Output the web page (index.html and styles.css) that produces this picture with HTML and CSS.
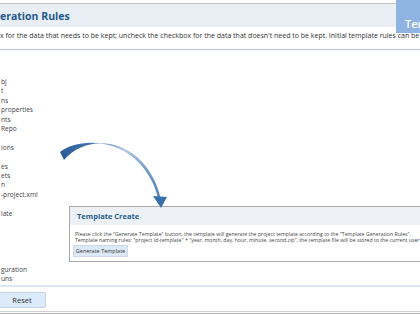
FILE: index.html
```html
<html><head>
<meta name="viewport" content="width=device-width, initial-scale=1">
<title>Template Generation Rules</title>
<meta charset="utf-8">
<link rel="stylesheet" href="styles.css">
</head><body>

<header class="rules-head">
<h1>eration Rules</h1>
</header>
<div class="tab">Tem</div>

<p class="hint">x for the data that needs to be kept; uncheck the checkbox for the data that doesn't need to be kept. Initial template rules can be</p>

<ul class="tree">
<li>bj</li>
<li>t</li>
<li>ns</li>
<li>properties</li>
<li>nts</li>
<li>Repo</li>
<li class="gap"></li>
<li>ions</li>
<li class="gap"></li>
<li>es</li>
<li>ets</li>
<li>n</li>
<li>-project.xml</li>
<li class="gap"></li>
<li>late</li>
<li class="gap"></li>
<li class="gap"></li>
<li class="gap"></li>
<li class="gap"></li>
<li class="gap"></li>
<li>guration</li>
<li>uns</li>
</ul>

<div class="footer">
<button class="reset">Reset</button>
</div>
<div class="rule"></div>

<div class="dialog">
<div class="dialog-head">Template Create</div>
<div class="dialog-body">
<p>Please click the "Generate Template" button, the template will generate the project template according to the "Template Generation Rules".</p>
<p>Template naming rules: "project id-template" + "year, month, day, hour, minute, second.zip", the template file will be stored to the current user's de</p>
<button class="gen">Generate Template</button>
</div>
</div>

<svg class="arrow" width="420" height="315" viewBox="0 0 420 315">
<defs>
<linearGradient id="fade" gradientUnits="userSpaceOnUse" x1="60" y1="0" x2="166" y2="0">
<stop offset="0" stop-color="#2a5a95"/>
<stop offset="0.3" stop-color="#4677b2"/>
<stop offset="0.62" stop-color="#b3cbe6"/>
<stop offset="0.85" stop-color="#6b95c9"/>
<stop offset="1" stop-color="#3a6fae"/>
</linearGradient>
</defs>
<path d="M60 152 C75 140 110 137 135 159 C148 171 155 185 158 198 L160.5 198 C157 183 150 169 137 157 C112 136 80 141 64 160 Z" fill="url(#fade)"/>
<polygon points="153,196 167,197 161,208" fill="#3a6fae"/>
</svg>

</body></html>
```

FILE: styles.css
```css
html, body {
	margin: 0;
	overflow: hidden;
}

body {
	position: relative;
	width: 420px;
	height: 315px;
	font-family: "Open Sans", "Noto Sans", sans-serif;
	color: #333;
	background: #fff;
}

.rules-head {
	margin-top: 3px;
	height: 23px;
	border-top: 1px solid #c4c4c4;
	background: #e9eef4;
	display: flex;
	align-items: center;
}

h1 {
	margin: 0;
	font-size: 10.5px;
	font-weight: 700;
	color: #1f5b8b;
}

.tab {
	position: absolute;
	top: 0;
	right: 0;
	width: 15px;
	height: 33px;
	padding-left: 9px;
	background: #8fb4e2;
	color: #fff;
	font-size: 11px;
	font-weight: 600;
	line-height: 48px;
	overflow: hidden;
	white-space: nowrap;
}

.hint {
	margin: 0;
	padding: 4px 0 8px;
	font-size: 7px;
	line-height: 10px;
	white-space: nowrap;
	border-bottom: 1px solid #b9c7d8;
}

.tree {
	list-style: none;
	margin: 27px 0 0;
	padding: 0 0 0 1px;
	font-size: 6.6px;
	line-height: 9.4px;
	color: #444;
}

.tree .gap {
	height: 9.4px;
}

.footer {
	margin-top: 1px;
	padding: 5px 0 3px;
	border-top: 2px solid #dbe7f4;
}

.reset {
	display: block;
	margin-left: -2px;
	width: 48px;
	height: 16px;
	background: #dcebfb;
	border: 1px solid #c3d3e4;
	border-radius: 2px;
	font-family: inherit;
	font-size: 7.5px;
	color: #333;
}

.rule {
	height: 1px;
	border-top: 1px solid #d0d0d0;
	border-bottom: 1px solid #b4b4b4;
}

.dialog {
	position: absolute;
	left: 69px;
	top: 206px;
	width: 380px;
	height: 54px;
	border: 1px solid #ababab;
	background: #fff;
}

.dialog-head {
	height: 18px;
	padding-left: 7px;
	background: #edf1f6;
	display: flex;
	align-items: center;
	font-size: 7.5px;
	font-weight: 700;
	color: #1f5b8b;
}

.dialog-body {
	padding: 5.5px 5px 0;
	font-size: 5.2px;
	line-height: 6px;
	color: #444;
	white-space: nowrap;
}

.dialog-body p {
	margin: 0;
}

.gen {
	display: block;
	margin: 2.5px 0 0 -2px;
	width: 55px;
	height: 12px;
	padding: 0;
	background: #dde9f7;
	border: 1px solid #cbd9e8;
	font-family: inherit;
	font-size: 5.5px;
	color: #333;
}

.arrow {
	position: absolute;
	top: 0;
	left: 0;
	pointer-events: none;
}
```
